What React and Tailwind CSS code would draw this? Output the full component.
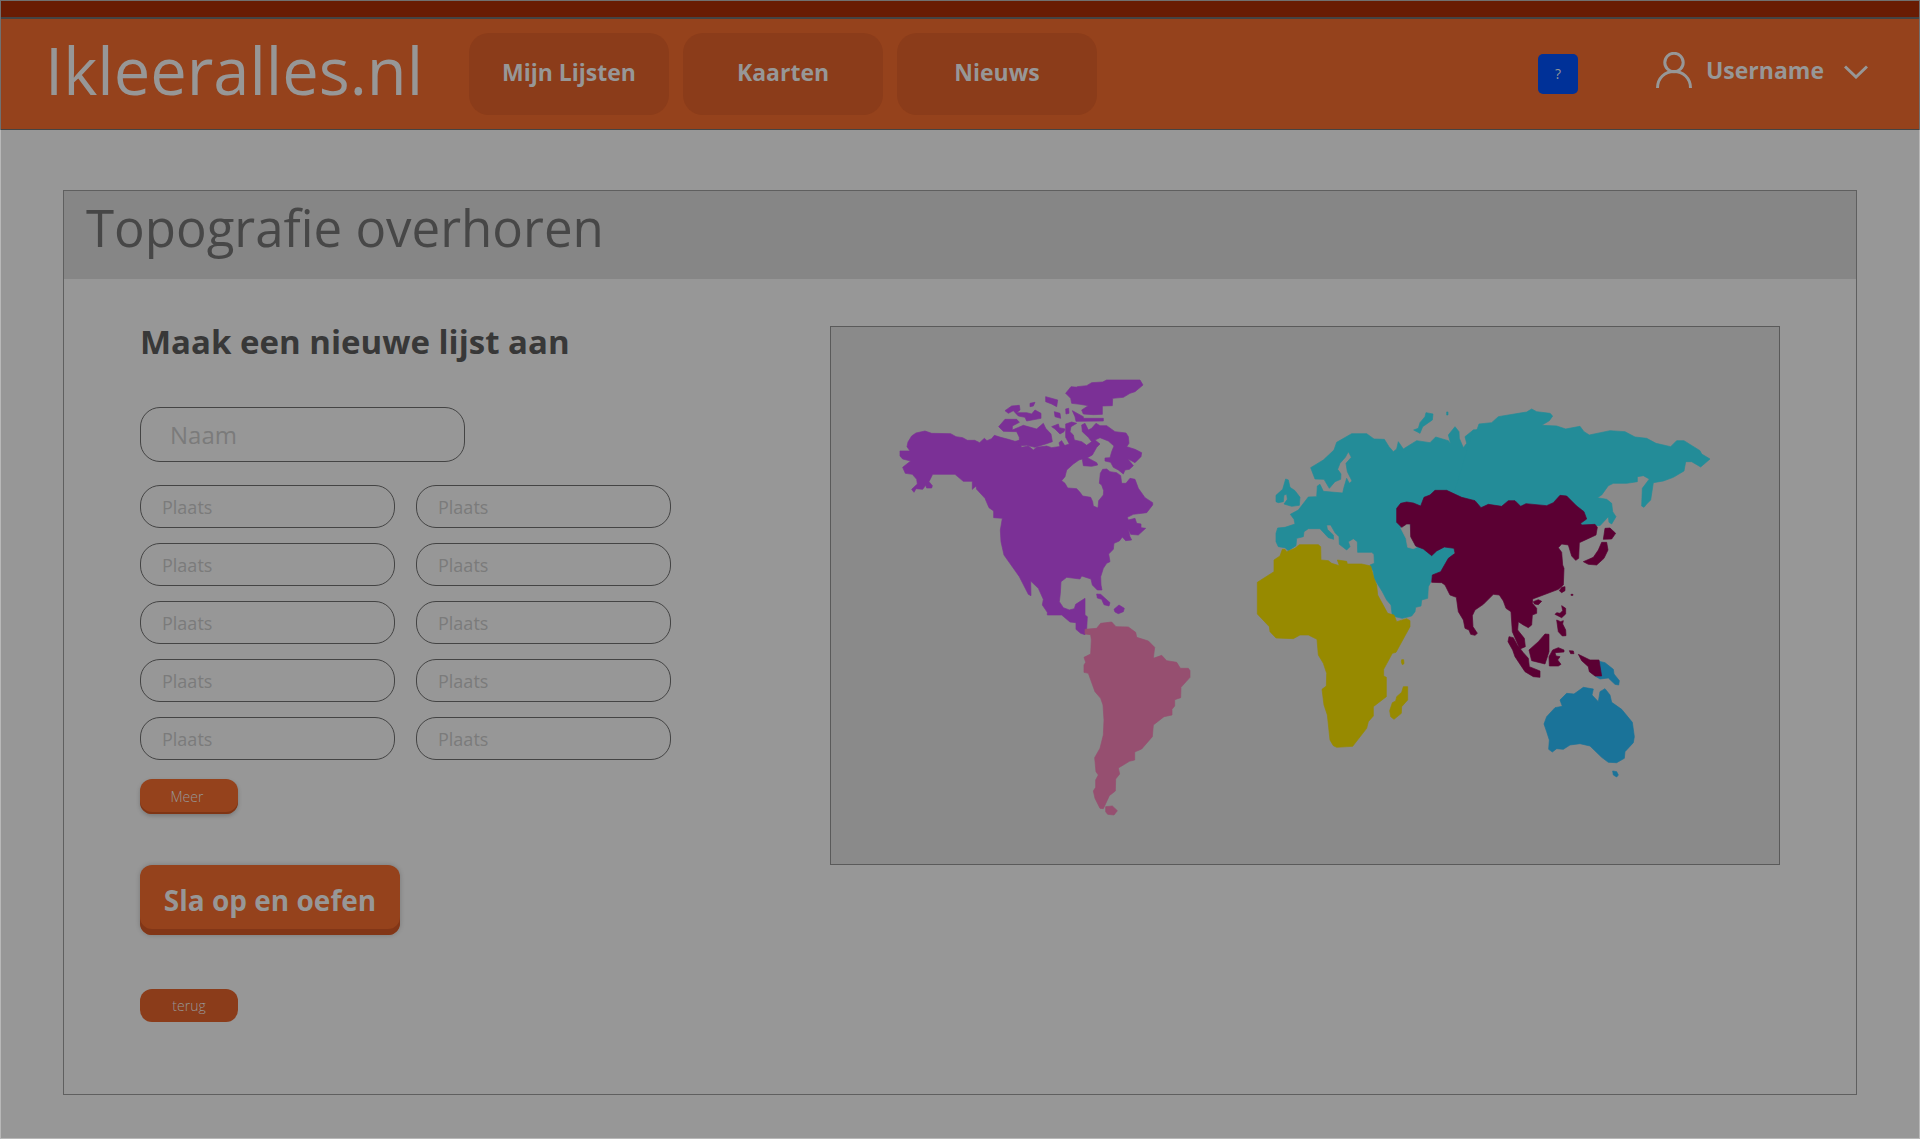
import React from "react";

const NAV_ITEMS = ["Mijn Lijsten", "Kaarten", "Nieuws"];
const PLACE_COUNT = 10;

const AMERICAS_NORTH = [
  "M60,273 L90,273 81,260 84,246 95,228 108,219 135,213 155,220 212,221 228,230 248,233 262,241 284,241 299,248 313,235 321,242 335,236 343,226 362,232 385,238 405,244 422,240 418,250 425,262 445,258 460,270 470,262 500,258 515,263 550,258 568,252 557,232 557,192 575,186 590,190 573,200 570,215 580,225 583,240 605,245 620,256 635,245 625,232 607,215 605,195 615,190 625,210 635,205 648,190 660,197 680,197 705,215 738,219 745,230 747,250 740,260 765,268 785,278 783,290 765,308 743,296 760,317 748,328 735,330 730,342 715,330 700,322 692,307 675,303 675,294 690,293 695,275 702,258 685,243 660,233 645,240 660,252 650,262 637,285 622,293 650,308 653,315 635,319 610,317 607,297 597,300 580,312 560,330 555,350 545,362 555,370 563,384 590,386 600,397 608,408 632,412 638,425 640,438 654,444 656,422 670,405 671,392 665,375 658,370 661,340 668,328 680,327 690,335 710,338 722,347 725,370 738,370 750,355 765,358 775,385 795,413 818,428 818,435 800,458 760,463 742,472 745,480 765,475 770,490 783,492 783,503 797,505 775,525 752,523 745,508 750,530 755,540 737,542 727,531 718,543 702,550 700,568 686,582 690,605 680,610 670,625 662,650 663,675 666,690 652,690 637,675 633,657 605,648 600,657 560,652 543,665 541,700 538,725 550,743 568,750 583,746 587,733 615,715 615,765 622,770 620,808 615,824 602,820 588,808 588,788 570,786 545,765 502,765 502,757 487,735 490,718 475,685 452,663 453,707 445,703 418,650 372,585 363,545 361,510 367,475 341,473 341,453 327,443 315,415 290,388 288,378 277,388 277,364 250,364 225,343 158,343 147,365 157,377 155,384 140,384 137,376 128,388 108,386 102,397 95,388 112,372 110,358 97,343 76,340 68,322 92,303 68,297 60,288Z",
  "M557,100 L573,80 595,82 597,92 592,80 620,77 635,68 668,66 680,60 780,60 789,75 765,95 750,100 730,112 698,115 697,137 667,138 667,163 640,164 610,162 605,150 625,137 600,133 575,130 572,115Z",
  "M577,152 L610,170 610,175 670,175 670,183 588,184 585,170Z",
  "M375,152 L395,138 418,136 420,150 410,158 440,158 455,162 465,150 483,160 483,175 440,183 435,172 415,168 400,152 385,160Z",
  "M450,130 L465,127 460,138 450,140Z",
  "M497,110 L533,120 530,140 515,132 497,125Z",
  "M523,155 L540,160 542,175 525,170Z",
  "M557,147 L566,145 567,160 558,162Z",
  "M515,200 L535,192 538,203 555,207 552,215 540,222 525,207Z",
  "M356,200 L375,178 410,178 418,187 397,198 397,210 430,196 470,207 490,190 497,205 513,222 517,245 497,252 465,262 440,256 418,257 418,232 410,215 370,214Z",
  "M537,248 L545,242 555,258 540,260Z",
  "M650,702 L662,703 690,728 687,738 672,734 665,718 652,714Z",
  "M702,748 L717,735 733,745 730,755 715,761 705,756Z",
];

const AMERICAS_SOUTH = [
  "M135,88 L170,85 182,70 215,66 228,80 265,81 287,97 290,112 325,123 344,142 340,175 365,166 380,182 410,187 421,205 445,205 450,212 450,232 423,262 422,293 404,299 404,318 396,328 396,345 372,350 340,375 337,410 305,447 284,456 284,480 268,484 235,504 239,522 227,537 226,573 208,587 190,626 180,625 165,595 160,573 167,562 167,540 175,525 168,515 164,473 180,445 190,405 192,360 189,315 182,295 165,275 145,220 132,217 132,195 137,187 132,172 152,162 154,120 152,104 135,102Z",
  "M197,620 L217,618 232,632 222,645 203,643 197,635Z",
];

const EUROPE = [
  "M108,400 L113,384 135,382 165,372 162,358 151,343 175,330 205,291 230,290 232,258 240,253 250,274 308,279 312,262 320,235 328,250 336,243 322,215 318,190 334,172 325,155 316,172 300,190 293,208 303,222 302,238 285,245 268,265 252,238 225,237 212,203 250,180 282,150 290,127 335,101 380,101 402,117 433,118 447,140 460,155 470,147 475,125 490,147 530,122 570,128 587,111 625,122 632,131 625,105 645,80 657,95 658,115 670,143 680,130 675,110 700,90 720,88 720,330 645,450 640,465 620,485 605,515 580,525 573,545 565,560 563,595 545,600 543,618 527,622 525,635 515,648 487,655 457,648 453,615 440,600 427,575 402,535 400,515 390,495 403,490 402,463 395,457 353,457 352,425 340,416 325,425 330,440 320,450 298,433 297,410 285,398 272,375 260,375 262,388 280,405 281,418 265,413 240,386 205,386 192,395 190,410 170,415 168,437 145,452 135,443 115,440 108,425Z",
  "M137,237 L145,240 150,262 165,272 180,292 178,316 155,319 132,312 142,298 140,283 132,285 130,305 115,308 108,305 108,286 128,268Z",
  "M558,38 L579,42 577,60 548,80 540,100 521,90 535,85 540,68 555,50Z",
  "M620,36 L624,36 624,45 620,45Z",
];

const SIBERIA =
  "M280,120 L290,122 297,102 335,98 355,80 385,75 440,66 455,57 470,65 510,70 518,78 508,92 485,106 530,108 557,117 600,109 612,125 628,135 690,122 735,125 765,141 800,145 828,160 872,170 890,152 912,152 960,182 965,192 990,207 962,231 935,215 917,215 912,243 880,262 850,273 820,278 812,330 800,342 792,352 785,348 787,295 808,267 790,257 772,260 772,275 740,280 700,280 685,287 665,315 652,323 680,328 695,340 698,365 708,380 695,402 687,397 685,380 660,407 600,405 400,400 200,380Z";

const CASPIAN = "M482,384 L508,366 514,405 524,435 530,442 520,446 503,442 498,415Z";

const AFRICA = [
  "M52,547 L102,515 102,480 120,468 127,448 135,448 140,455 165,445 178,434 235,434 242,440 243,480 265,482 275,490 298,497 292,480 320,484 322,492 365,492 392,498 402,535 410,555 413,585 443,640 462,645 470,665 500,656 510,662 510,680 468,757 457,760 431,808 431,828 439,832 439,890 400,920 400,948 385,965 380,985 338,1039 290,1042 280,1037 270,1020 262,945 252,915 246,868 259,858 260,820 250,790 235,765 231,718 205,705 180,705 160,716 108,714 90,695 88,680 52,642Z",
  "M490,860 L503,860 503,900 485,920 484,940 462,958 452,950 449,932 457,908 467,903 470,890 485,877Z",
  "M485,779 L491,779 492,791 487,794 484,786Z",
];

const ASIA = [
  "M50,115 L62,100 80,96 100,99 122,108 132,82 150,75 165,61 200,61 245,82 285,92 303,113 325,103 365,109 385,92 405,92 422,109 438,101 500,107 520,98 540,76 560,78 590,108 612,125 620,147 602,160 605,165 645,163 652,172 648,195 598,218 596,265 587,271 575,258 565,225 545,222 535,233 545,247 548,285 552,295 550,345 535,358 490,375 458,387 457,400 470,415 470,430 457,435 455,465 445,473 430,465 415,455 413,480 433,505 436,530 420,537 410,515 397,485 393,425 378,415 370,393 358,375 340,373 310,403 285,420 277,437 279,470 292,490 285,496 272,493 267,480 255,475 250,450 235,425 229,382 210,375 195,345 185,338 155,337 157,315 182,305 205,265 225,250 222,235 193,231 170,243 155,257 130,237 107,228 92,200 91,162 80,162 65,172 50,157Z",
  "M387,500 L400,503 412,525 430,548 445,565 448,590 480,603 480,622 460,620 435,605 405,560 398,540 384,515Z",
  "M447,540 L475,515 495,492 507,493 507,545 495,582 455,572Z",
  "M507,560 L518,540 535,533 552,540 552,546 525,548 528,558 540,560 533,570 543,583 535,588 508,588Z",
  "M568,542 L580,543 582,551 572,551Z",
  "M675,175 L690,174 707,190 695,207 670,208Z",
  "M665,217 L680,217 684,240 672,265 650,285 625,283 610,275 640,262 655,240Z",
  "M460,395 L475,389 485,394 475,404 463,402Z",
  "M545,352 L555,350 555,362 545,368 538,362Z",
  "M573,373 L579,373 579,376 573,376Z",
  "M545,407 L557,415 557,432 545,443 525,433 530,428 540,430 548,422Z",
  "M530,450 L542,455 550,452 548,462 557,480 558,497 547,498 535,485Z",
];

const OCEANIA = [
  "M650,572 L675,578 700,598 702,612 718,632 716,645 705,643 685,624 660,627 645,618Z",
  "M492,762 L500,740 525,713 547,709 540,690 560,670 582,672 610,652 640,657 636,675 655,695 660,665 675,656 690,675 695,697 725,718 757,757 763,800 760,818 735,845 733,865 710,878 685,877 665,862 630,828 600,821 570,825 550,838 530,836 517,846 506,838 508,810 500,785Z",
  "M698,903 L710,905 715,915 710,921 700,915Z",
];

const PAPUA_WEST = "M595,553 L630,570 657,570 665,618 645,618 628,605 625,590 605,572Z";

function Region({ x, y, color, paths }) {
  return (
    <g
      transform={`translate(${x} ${y}) scale(0.33333)`}
      fill={color}
      stroke={color}
      strokeWidth="2"
      strokeLinejoin="round"
    >
      {paths.map((d) => (
        <path key={d} d={d} />
      ))}
    </g>
  );
}

function WorldMap() {
  return (
    <svg viewBox="831 327 948 537" className="block w-full" role="img" aria-label="Wereldkaart">
      <Region x={880} y={360} color="#7b3096" paths={AMERICAS_NORTH} />
      <Region x={1040} y={600} color="#964f70" paths={AMERICAS_SOUTH} />
      <Region x={1240} y={400} color="#238c98" paths={EUROPE} />
      <Region x={1380} y={390} color="#238c98" paths={[SIBERIA]} />
      <Region x={1240} y={400} color="#8a8a8a" paths={[CASPIAN]} />
      <Region x={1240} y={400} color="#978a00" paths={AFRICA} />
      <Region x={1380} y={470} color="#1a7399" paths={OCEANIA} />
      <Region x={1380} y={470} color="#5b0033" paths={[...ASIA, PAPUA_WEST]} />
    </svg>
  );
}

function Header() {
  return (
    <header className="border border-b-0 border-[#707070]">
      <div className="h-4 bg-[#691c03]" />
      <div className="flex h-[113px] items-center border-t-2 border-b border-[#444] bg-[#95421c] pr-[51px] pl-11 text-[#979797]">
        <a href="#home" className="w-[424px] pb-2 text-[65px] leading-none">
          Ikleeralles.nl
        </a>
        <nav className="flex gap-[14px]">
          {NAV_ITEMS.map((item) => (
            <a
              key={item}
              href="#nav"
              className="flex h-[82px] w-[200px] items-center justify-center rounded-[20px] bg-[#8b3c1a] pb-1 text-[23px] font-bold"
            >
              {item}
            </a>
          ))}
        </nav>
        <button
          type="button"
          className="mr-[78px] ml-auto size-10 rounded-[5px] bg-[#003198] text-sm"
        >
          ?
        </button>
        <button type="button" className="flex items-center pb-2">
          <svg width="36" height="36" viewBox="0 0 36 36" fill="none" stroke="currentColor" strokeWidth="3" aria-hidden="true">
            <circle cx="18" cy="10.5" r="9.2" />
            <path d="M1.5 36 C1.5 26 9 19.5 18 19.5 S34.5 26 34.5 36" />
          </svg>
          <span className="ml-[14px] text-[23px] font-bold">Username</span>
          <svg className="mt-1 ml-5" width="24" height="14" viewBox="0 0 24 14" fill="none" stroke="currentColor" strokeWidth="3" aria-hidden="true">
            <path d="M1 1.5 L12 12 L23 1.5" />
          </svg>
        </button>
      </div>
    </header>
  );
}

function ListForm() {
  return (
    <form className="flex w-[531px] flex-none flex-col items-start" onSubmit={(e) => e.preventDefault()}>
      <h2 className="text-[33px] leading-8 font-bold text-[#383838]">Maak een nieuwe lijst aan</h2>
      <input
        type="text"
        aria-label="Naam"
        placeholder="Naam"
        className="mt-[49px] h-[55px] w-[325px] rounded-[20px] border border-[#444] px-[29px] text-2xl placeholder:text-[#7b7b7b]"
      />
      <div className="mt-[23px] grid w-full grid-cols-2 gap-x-[21px] gap-y-[15px]">
        {Array.from({ length: PLACE_COUNT }, (_, i) => (
          <input
            key={i}
            type="text"
            aria-label={`Plaats ${i + 1}`}
            placeholder="Plaats"
            className="h-[43px] w-full rounded-[20px] border border-[#444] px-[21px] text-lg placeholder:text-[#7b7b7b]"
          />
        ))}
      </div>
      <button
        type="button"
        className="mt-[19px] h-[35px] w-[98px] rounded-xl bg-[#95421c] pr-1 text-sm font-light text-[#979797] shadow-[inset_0_-2px_0_#7f3515,0_2px_4px_rgba(0,0,0,0.2)]"
      >
        Meer
      </button>
      <button
        type="submit"
        className="mt-[51px] h-[70px] w-[260px] rounded-xl bg-[#95421c] text-[28px] font-bold text-[#979797] shadow-[inset_0_-6px_0_#823617,0_0_5px_rgba(0,0,0,0.2)]"
      >
        Sla op en oefen
      </button>
      <button
        type="button"
        className="mt-[54px] h-[33px] w-[98px] rounded-xl bg-[#8b3c1a] text-sm font-light text-[#979797]"
      >
        terug
      </button>
    </form>
  );
}

export default function App() {
  return (
    <div className="min-h-screen bg-[#979797] font-['Open_Sans','Noto_Sans',sans-serif]">
      <Header />
      <main className="border-x border-b border-[#b8b8b8] px-[62px] pt-[60px] pb-[43px]">
        <section className="border border-[#5f5f5f]">
          <h1 className="h-[88px] bg-[#868686] px-[22px] text-[51px] leading-[72px] text-[#474747]">
            Topografie overhoren
          </h1>
          <div className="flex items-start justify-between gap-20 px-[76px] pt-[47px] pb-[72px]">
            <ListForm />
            <div className="max-w-[950px] flex-1 border border-[#5a5a5a] bg-[#8a8a8a]">
              <WorldMap />
            </div>
          </div>
        </section>
      </main>
    </div>
  );
}
